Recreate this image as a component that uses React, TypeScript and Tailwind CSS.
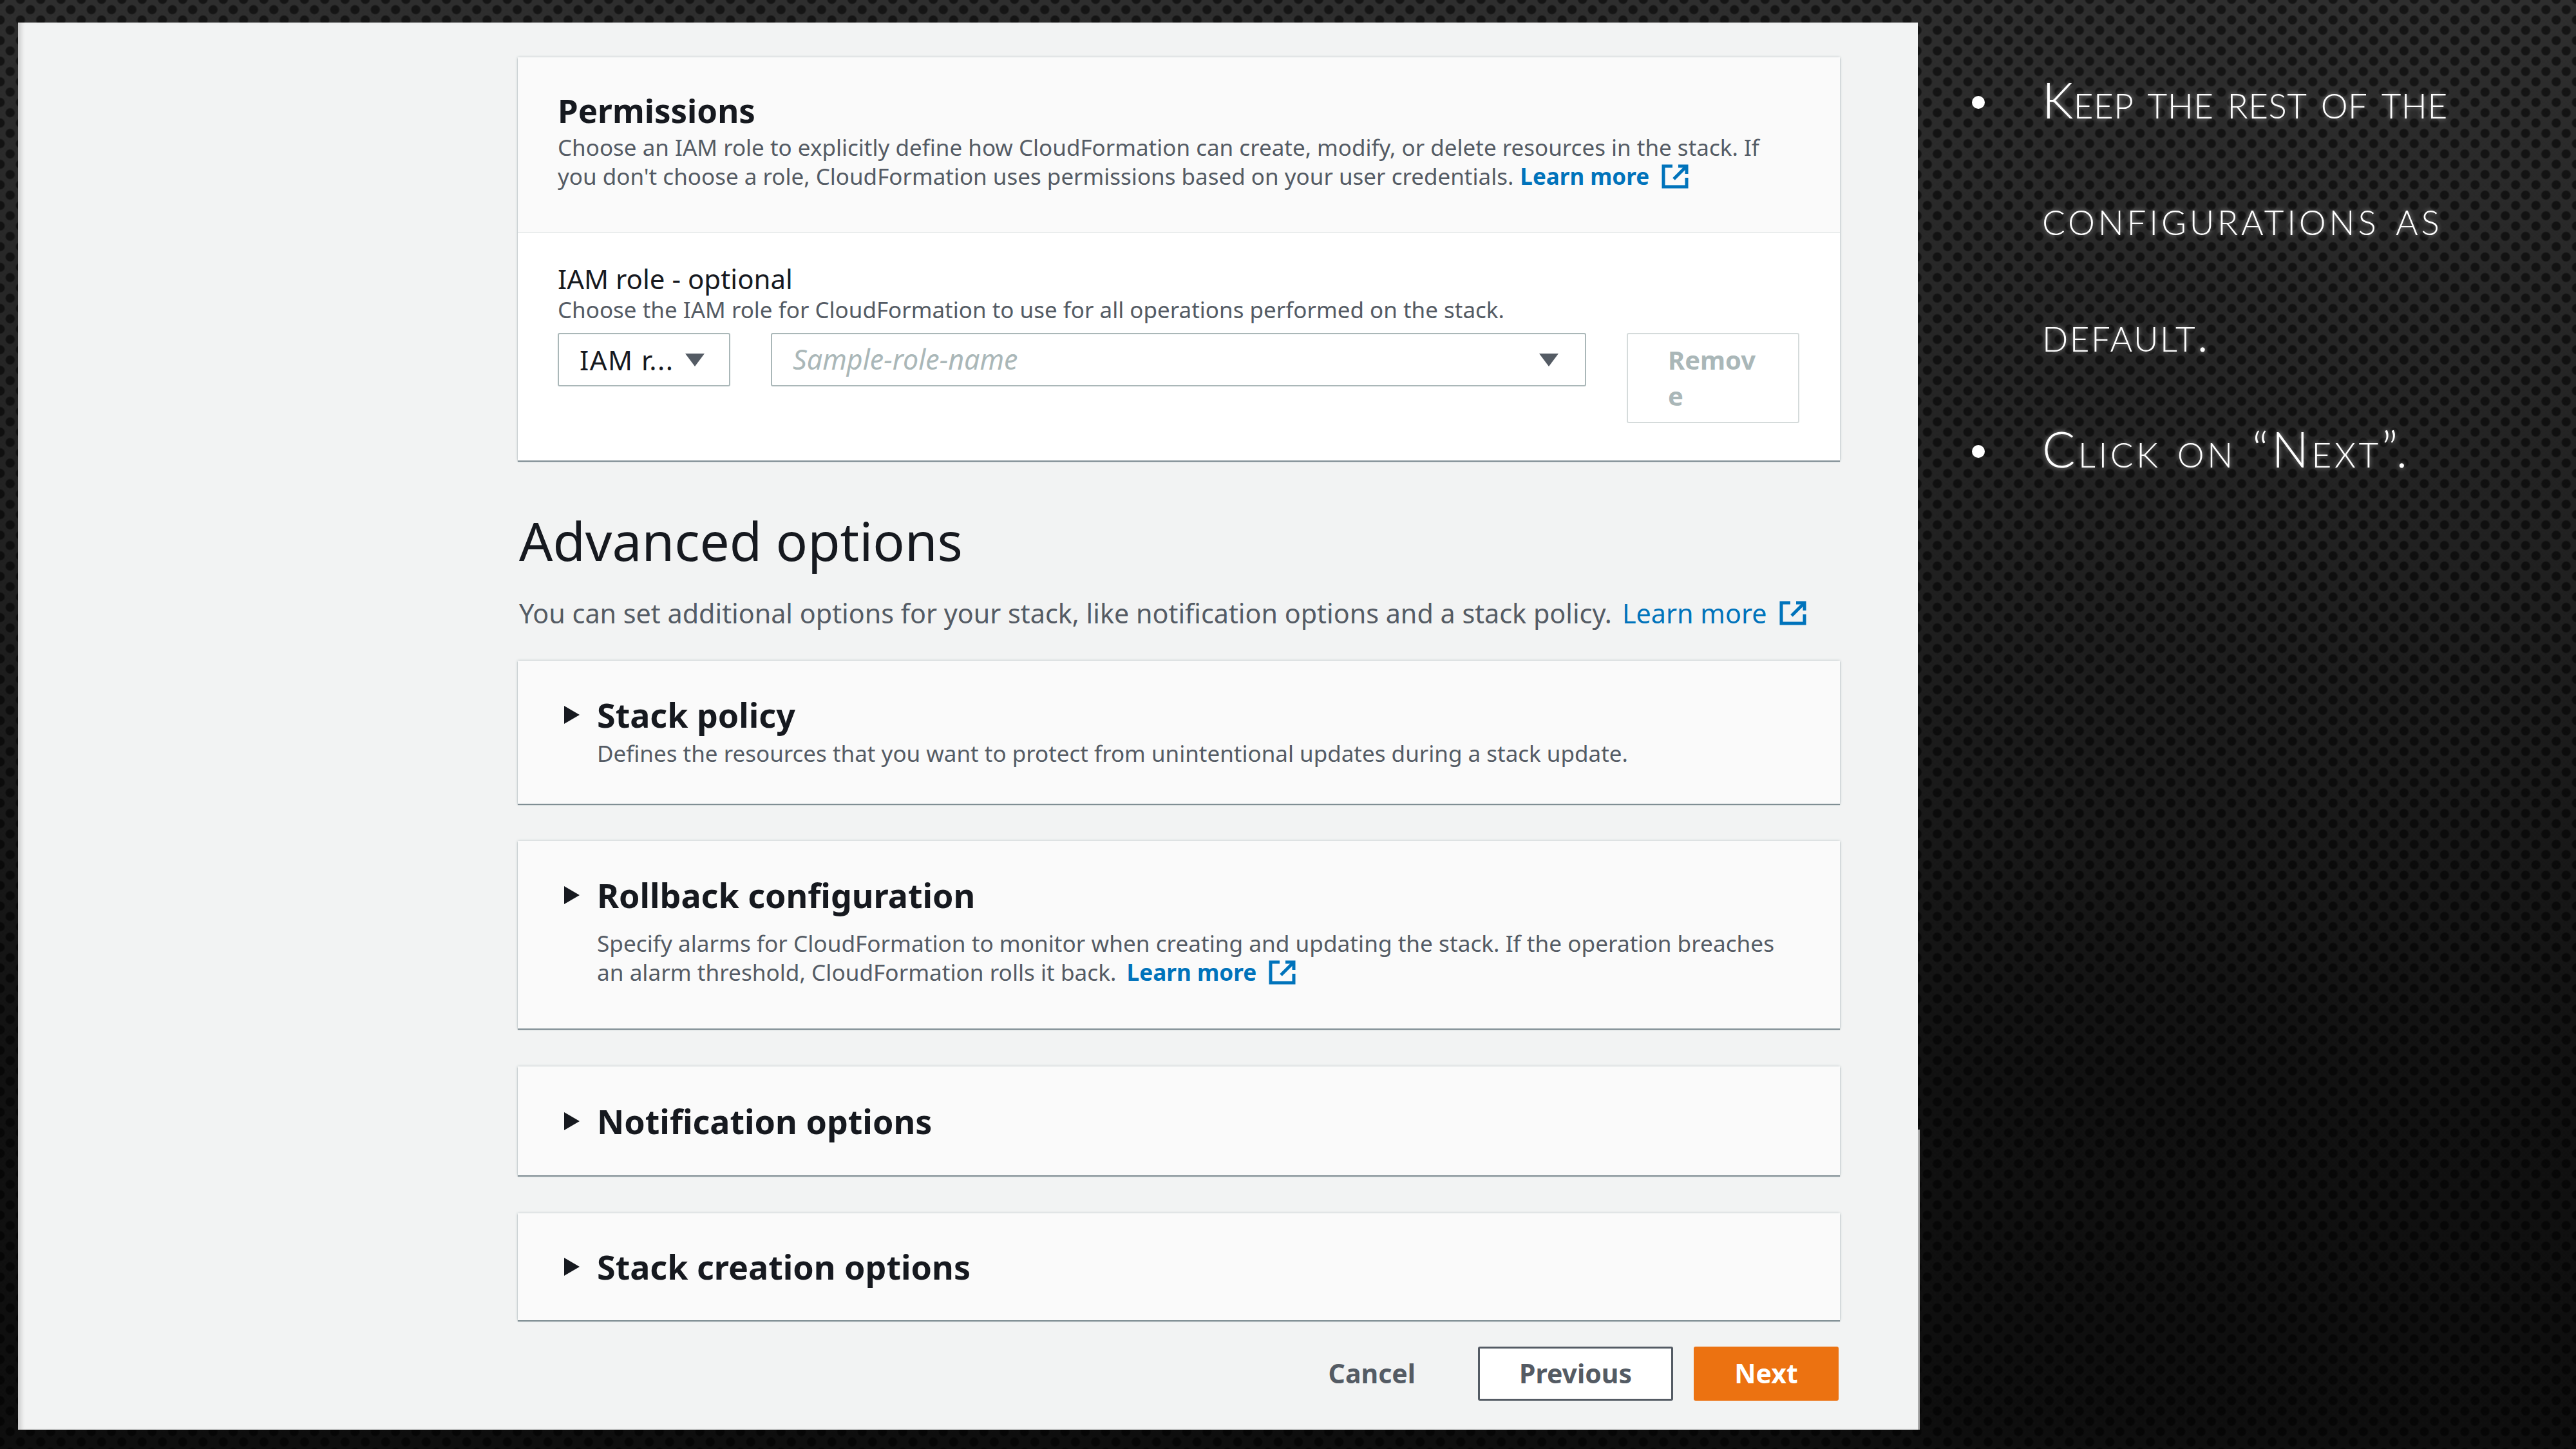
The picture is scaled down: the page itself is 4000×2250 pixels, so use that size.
function ExternalIcon({ className }: { className: string }) {
  return (
    <svg viewBox="0 0 42 38" fill="none" stroke="#0073bb" strokeWidth="5" className={className}>
      <path d="M17 3 H3 V35 H39 V21" />
      <path d="M19 23 L38 4" />
      <path d="M26 3 H39 V15" />
    </svg>
  );
}

function Caret({ className }: { className: string }) {
  return (
    <svg viewBox="0 0 30 20" fill="#545b64" className={className}>
      <path d="M0 0 H30 L15 20 Z" />
    </svg>
  );
}

function RightCaret() {
  return (
    <svg viewBox="0 0 25 28" fill="#16191f" className="w-[25px] h-[28px] shrink-0">
      <path d="M1 0 L25 14 L1 28 Z" />
    </svg>
  );
}

const card = "bg-[#fafafa] w-[2053px] shadow-[0_2px_1px_0_#808e94,0_0_4px_0_#b8c2c4]";

export default function App() {
  return (
    <div className="w-[4000px] h-[2250px] relative overflow-hidden flex font-['Noto_Sans','Liberation_Sans',sans-serif] bg-[linear-gradient(180deg,#2e2e2e_0%,#222_35%,#111_75%,#0e0e0e_100%)]">
      <div className="absolute inset-0 bg-[radial-gradient(circle,rgba(0,0,0,0.55)_6px,rgba(0,0,0,0)_8px)] bg-[length:31.5px_32px] bg-[position:0_-1px]" />
      <div className="absolute inset-0 bg-[radial-gradient(circle,rgba(0,0,0,0.55)_6px,rgba(0,0,0,0)_8px)] bg-[length:31.5px_32px] bg-[position:16px_15px]" />

      <div className="relative ml-[28px] mt-[35px] w-[2950px] h-[2185px] shrink-0 bg-[#f2f3f3] shadow-[inset_8px_0_6px_-3px_#cfcfcf] pl-[776px] pt-[54px]">
        <div className={card}>
          <div className="h-[273px] border-b-2 border-[#eaeded] pl-[62px] pt-[50px]">
            <div className="text-[51px] leading-[64px] font-bold text-[#16191f]">Permissions</div>
            <div className="text-[35px] leading-[45px] text-[#545b64] mt-[3px] w-[1900px]">
              Choose an IAM role to explicitly define how CloudFormation can create, modify, or delete resources in the stack. If you don't choose a role, CloudFormation uses permissions based on your user credentials.
              <span className="inline-flex items-center align-top ml-[10px] h-[45px] gap-[19px] text-[#0073bb] font-bold">
                <span>Learn more</span>
                <ExternalIcon className="w-[42px] h-[38px]" />
              </span>
            </div>
          </div>
          <div className="h-[353px] bg-white pl-[62px] pt-[45px]">
            <div className="text-[42px] leading-[52px] text-[#16191f]">IAM role - optional</div>
            <div className="text-[35px] leading-[44px] text-[#545b64]">Choose the IAM role for CloudFormation to use for all operations performed on the stack.</div>
            <div className="flex items-start mt-[14px]">
              <div className="w-[268px] h-[83px] border-2 border-[#aab7b8] rounded-[3px] flex items-center pl-[32px] text-[42px] text-[#16191f]">
                <span className="whitespace-nowrap tracking-[1.5px]">IAM r...</span>
                <Caret className="w-[30px] h-[20px] ml-[18px]" />
              </div>
              <div className="w-[1266px] h-[83px] ml-[63px] border-2 border-[#aab7b8] rounded-[3px] flex items-center justify-between pl-[32px] pr-[40px] text-[43px] italic text-[#aab7b8]">
                Sample-role-name
                <Caret className="w-[32px] h-[20px]" />
              </div>
              <div className="w-[268px] h-[140px] ml-[63px] border-2 border-[#d5dbdb] rounded-[3px] pl-[62px] pt-[12px] text-[40px] leading-[56px] font-bold text-[#aab7b8]">
                Remov
                <br />e
              </div>
            </div>
          </div>
        </div>

        <div className="text-[82px] leading-[100px] text-[#16191f] mt-[74px] w-[2053px] pl-[2px]">Advanced options</div>
        <div className="flex items-center text-[41.3px] leading-[52px] text-[#545b64] mt-[37px] pl-[2px]">
          You can set additional options for your stack, like notification options and a stack policy.
          <span className="ml-[16px] text-[#0073bb]">Learn more</span>
          <ExternalIcon className="w-[42px] h-[38px] ml-[20px]" />
        </div>

        <div className={card + " h-[222px] mt-[48px] pl-[71px] pt-[52px]"}>
          <div className="flex items-center gap-[27px] text-[52px] leading-[64px] font-bold text-[#16191f]">
            <RightCaret />
            Stack policy
          </div>
          <div className="text-[35px] leading-[44px] text-[#545b64] pl-[52px] mt-[6px]">Defines the resources that you want to protect from unintentional updates during a stack update.</div>
        </div>

        <div className={card + " h-[291px] mt-[58px] pl-[71px] pt-[52px]"}>
          <div className="flex items-center gap-[27px] text-[52px] leading-[64px] font-bold text-[#16191f]">
            <RightCaret />
            Rollback configuration
          </div>
          <div className="text-[35.2px] leading-[45px] text-[#545b64] pl-[52px] mt-[20px] w-[1900px]">
            Specify alarms for CloudFormation to monitor when creating and updating the stack. If the operation breaches an alarm threshold, CloudFormation rolls it back.
            <span className="inline-flex items-center align-top ml-[16px] h-[45px] gap-[19px] text-[#0073bb] font-bold">
              <span>Learn more</span>
              <ExternalIcon className="w-[42px] h-[38px]" />
            </span>
          </div>
        </div>

        <div className={card + " h-[169px] mt-[59px] pl-[71px] flex items-center"}>
          <div className="flex items-center gap-[27px] text-[52px] leading-[64px] font-bold text-[#16191f]">
            <RightCaret />
            Notification options
          </div>
        </div>

        <div className={card + " h-[166px] mt-[59px] pl-[71px] flex items-center"}>
          <div className="flex items-center gap-[27px] text-[52px] leading-[64px] font-bold text-[#16191f]">
            <RightCaret />
            Stack creation options
          </div>
        </div>

        <div className="flex w-[2051px] justify-end items-center mt-[41px] text-[41px] font-bold">
          <span className="text-[#545b64] mr-[97px]">Cancel</span>
          <div className="w-[303px] h-[84px] bg-white border-[3px] border-[#545b64] rounded-[3px] flex items-center justify-center text-[#545b64]">Previous</div>
          <div className="w-[225px] h-[84px] ml-[32px] bg-[#ec7211] rounded-[3px] flex items-center justify-center text-white">Next</div>
        </div>

        <div className="absolute right-[-3px] top-[1719px] bottom-0 w-[3px] bg-[#a8a8a8]" />
      </div>

      <div className="relative ml-[84px] mt-[93px] flex flex-col text-white font-['Lato','Liberation_Sans',sans-serif] font-light text-[76px] leading-[181px] [font-variant-caps:small-caps] [text-shadow:0_0_7px_rgba(255,255,255,0.55)]">
        <div className="flex">
          <div className="w-[20px] h-[20px] mt-[56px] rounded-full bg-white shrink-0" />
          <div className="ml-[89px] -mt-[29px]">
            <div className="tracking-[0.5px]">Keep the rest of the</div>
            <div className="tracking-[4.8px]">configurations as</div>
            <div className="tracking-[2.5px]">default.</div>
          </div>
        </div>
        <div className="flex mt-[28px]">
          <div className="w-[20px] h-[20px] mt-[56px] rounded-full bg-white shrink-0" />
          <div className="ml-[89px] -mt-[29px] tracking-[4.6px]">Click on “Next”.</div>
        </div>
      </div>
    </div>
  );
}
